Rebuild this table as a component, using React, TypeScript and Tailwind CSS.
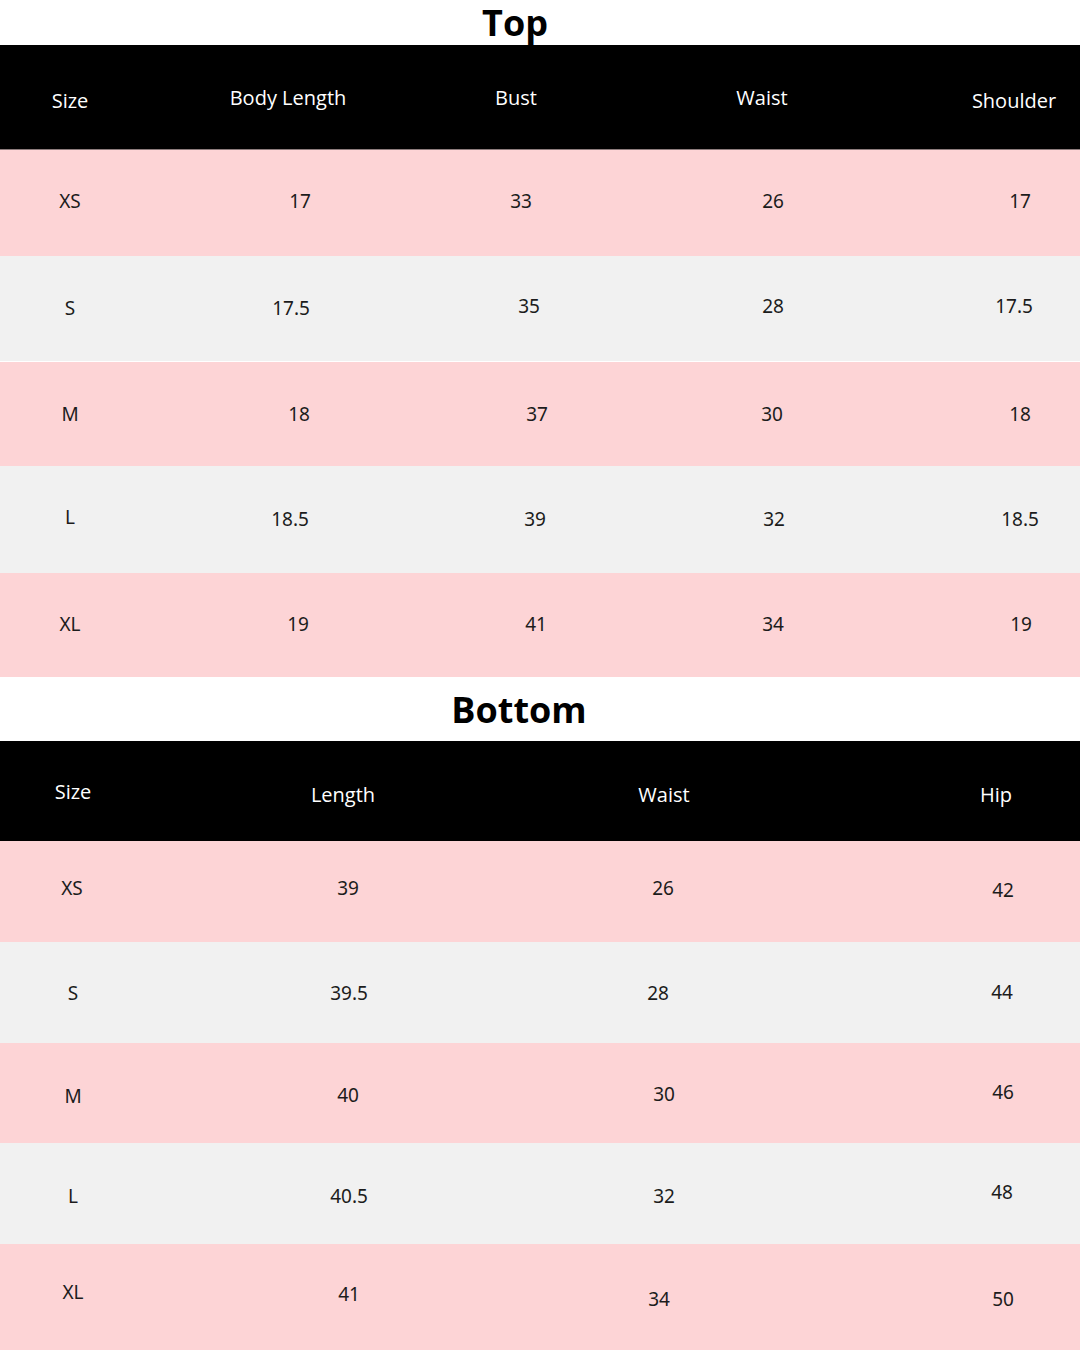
import React from "react";

type Cell = { t: string; x: number; y: number };

const topCols = [140, 310, 160, 324, 146];
const bottomCols = [146, 400, 240, 294];

function centers(cols: number[]) {
  const out: number[] = [];
  let acc = 0;
  for (const w of cols) {
    out.push(acc + w / 2);
    acc += w;
  }
  return out;
}

// x = absolute center x, y = offset from row vertical center
const topHeader: Cell[] = [
  { t: "Size", x: 70, y: 4 },
  { t: "Body Length", x: 288, y: 1 },
  { t: "Bust", x: 516, y: 1 },
  { t: "Waist", x: 762, y: 1 },
  { t: "Shoulder", x: 1014, y: 4 },
];

const topRows: { bg: string; h: string; cells: Cell[] }[] = [
  { bg: "bg-[#fdd4d6]", h: "h-[106px]", cells: [
    { t: "XS", x: 70, y: -2 }, { t: "17", x: 300, y: -2 }, { t: "33", x: 521, y: -2 }, { t: "26", x: 773, y: -2 }, { t: "17", x: 1020, y: -2 } ] },
  { bg: "bg-[#f1f1f1] border-b border-white", h: "h-[106px]", cells: [
    { t: "S", x: 70, y: 0 }, { t: "17.5", x: 291, y: 0 }, { t: "35", x: 529, y: -2 }, { t: "28", x: 773, y: -2 }, { t: "17.5", x: 1014, y: -2 } ] },
  { bg: "bg-[#fdd4d6]", h: "h-[104px]", cells: [
    { t: "M", x: 70, y: 0 }, { t: "18", x: 299, y: 0 }, { t: "37", x: 537, y: 0 }, { t: "30", x: 772, y: 0 }, { t: "18", x: 1020, y: 0 } ] },
  { bg: "bg-[#f1f1f1]", h: "h-[107px]", cells: [
    { t: "L", x: 70, y: -2 }, { t: "18.5", x: 290, y: 0 }, { t: "39", x: 535, y: 0 }, { t: "32", x: 774, y: 0 }, { t: "18.5", x: 1020, y: 0 } ] },
  { bg: "bg-[#fdd4d6]", h: "h-[104px]", cells: [
    { t: "XL", x: 70, y: -1 }, { t: "19", x: 298, y: -1 }, { t: "41", x: 536, y: -1 }, { t: "34", x: 773, y: -1 }, { t: "19", x: 1021, y: -1 } ] },
];

const bottomHeader: Cell[] = [
  { t: "Size", x: 73, y: 1 },
  { t: "Length", x: 343, y: 4 },
  { t: "Waist", x: 664, y: 4 },
  { t: "Hip", x: 996, y: 4 },
];

const bottomRows: { bg: string; h: string; cells: Cell[] }[] = [
  { bg: "bg-[#fdd4d6]", h: "h-[101px]", cells: [
    { t: "XS", x: 72, y: -3 }, { t: "39", x: 348, y: -3 }, { t: "26", x: 663, y: -3 }, { t: "42", x: 1003, y: -1 } ] },
  { bg: "bg-[#f1f1f1]", h: "h-[101px]", cells: [
    { t: "S", x: 73, y: 1 }, { t: "39.5", x: 349, y: 1 }, { t: "28", x: 658, y: 1 }, { t: "44", x: 1002, y: 0 } ] },
  { bg: "bg-[#fdd4d6]", h: "h-[100px]", cells: [
    { t: "M", x: 73, y: 3 }, { t: "40", x: 348, y: 2 }, { t: "30", x: 664, y: 1 }, { t: "46", x: 1003, y: -1 } ] },
  { bg: "bg-[#f1f1f1]", h: "h-[101px]", cells: [
    { t: "L", x: 73, y: 3 }, { t: "40.5", x: 349, y: 3 }, { t: "32", x: 664, y: 3 }, { t: "48", x: 1002, y: -1 } ] },
  { bg: "bg-[#fdd4d6]", h: "h-[106px]", cells: [
    { t: "XL", x: 73, y: -5 }, { t: "41", x: 349, y: -3 }, { t: "34", x: 659, y: 2 }, { t: "50", x: 1003, y: 2 } ] },
];

function Row({
  cols,
  cells,
  className,
  textClass,
}: {
  cols: number[];
  cells: Cell[];
  className: string;
  textClass: string;
}) {
  const cs = centers(cols);
  return (
    <div className={`flex items-center ${className}`}>
      {cells.map((c, i) => (
        <div
          key={i}
          className="flex shrink-0 items-center justify-center"
          style={{ width: cols[i] }}
        >
          <span
            className={`whitespace-nowrap ${textClass}`}
            style={{ transform: `translate(${c.x - cs[i]}px, ${c.y}px)` }}
          >
            {c.t}
          </span>
        </div>
      ))}
    </div>
  );
}

const bodyText =
  "text-[19px] leading-none text-[#1c1c1c] font-['Noto_Sans',sans-serif]";
const headText =
  "text-[20px] leading-none text-white font-['Open_Sans',sans-serif]";

export default function App() {
  return (
    <div className="w-[1080px] h-[1350px] overflow-hidden bg-white font-['Open_Sans',sans-serif]">
      <div className="flex h-[45px] items-center justify-center">
        <h1 className="translate-x-[-25px] text-[36px] font-bold leading-[36px] text-black">
          Top
        </h1>
      </div>
      <Row
        cols={topCols}
        cells={topHeader}
        className="h-[105px] bg-black border-b border-[#8d7c7d]"
        textClass={headText}
      />
      {topRows.map((r, i) => (
        <Row
          key={i}
          cols={topCols}
          cells={r.cells}
          className={`${r.bg} ${r.h}`}
          textClass={bodyText}
        />
      ))}
      <div className="flex h-[64px] items-center justify-center">
        <h2 className="translate-x-[-21px] translate-y-[1px] text-[36px] font-bold leading-[44px] text-black">
          Bottom
        </h2>
      </div>
      <Row
        cols={bottomCols}
        cells={bottomHeader}
        className="h-[100px] bg-black"
        textClass={headText}
      />
      {bottomRows.map((r, i) => (
        <Row
          key={i}
          cols={bottomCols}
          cells={r.cells}
          className={`${r.bg} ${r.h}`}
          textClass={bodyText}
        />
      ))}
    </div>
  );
}
